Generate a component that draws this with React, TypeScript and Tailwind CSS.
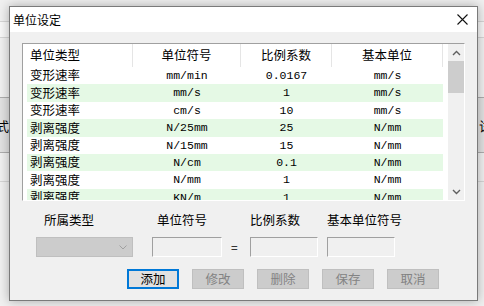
import React from "react";

const rows = [
  ["变形速率", "mm/min", "0.0167", "mm/s"],
  ["变形速率", "mm/s", "1", "mm/s"],
  ["变形速率", "cm/s", "10", "mm/s"],
  ["剥离强度", "N/25mm", "25", "N/mm"],
  ["剥离强度", "N/15mm", "15", "N/mm"],
  ["剥离强度", "N/cm", "0.1", "N/mm"],
  ["剥离强度", "N/mm", "1", "N/mm"],
  ["剥离强度", "KN/m", "1", "N/mm"],
];

const cjk = "font-['Noto_Sans_CJK_SC',sans-serif]";
const mono = "font-['Liberation_Mono','Noto_Sans_CJK_SC',monospace]";

function Chevron({ up }: { up?: boolean }) {
  return (
    <svg width="9" height="6" viewBox="0 0 9 6">
      <polyline
        points={up ? "1,5 4.5,1.5 8,5" : "1,1 4.5,4.5 8,1"}
        fill="none"
        stroke="#606060"
        strokeWidth="1.4"
      />
    </svg>
  );
}

function Button({ label, primary }: { label: string; primary?: boolean }) {
  return (
    <div
      className={
        primary
          ? "w-[52px] h-[20px] flex items-center justify-center bg-[#e1e1e1] border-2 border-[#0078d7] text-[12.5px] text-black"
          : "w-[52px] h-[20px] flex items-center justify-center bg-[#cccccc] border border-[#bfbfbf] text-[12.5px] text-[#838383]"
      }
    >
      {label}
    </div>
  );
}

function TextBox({ w }: { w: string }) {
  return (
    <div className={`${w} h-[20px] border border-[#a0a0a0] border-r-white border-b-white bg-[#f0f0f0]`} />
  );
}

export default function App() {
  return (
    <div className={`relative w-[484px] h-[306px] overflow-hidden bg-[#f0f0f0] ${cjk}`}>
      {/* window behind the dialog */}
      <div className="flex flex-col">
        <div className="h-[22px] border-b border-[#d5d5d5]" />
        <div className="h-[16px] border-b border-[#d5d5d5] bg-[#f7f7f7]" />
        <div className="h-[59px]" />
        <div className="h-[56px] bg-[#e1e1e1] border-y border-[#adadad] flex items-center justify-between text-[13px] leading-none">
          <span className="-ml-[4px]">式</span>
          <span className="mr-[-8px]">试</span>
        </div>
        <div className="h-[29px] border-b border-[#d5d5d5]" />
      </div>

      {/* dialog */}
      <div className="absolute left-[9px] top-[6px] w-[469px] h-[295px] border border-[#7a7a7a] bg-[#f0f0f0] shadow-[0_0_10px_rgba(0,0,0,0.3)] flex flex-col">
        <div className="h-[25px] bg-white flex items-center justify-between pl-[3px] pr-[9px]">
          <span className="text-[12px] text-black leading-none">单位设定</span>
          <svg width="11" height="11" viewBox="0 0 11 11">
            <path d="M0.5 0.5 L10.5 10.5 M10.5 0.5 L0.5 10.5" stroke="#111" strokeWidth="1.1" />
          </svg>
        </div>

        {/* list view */}
        <div className="mt-[11px] ml-[12px] w-[443px] h-[158px] border border-[#a0a0a0] border-r-white border-b-white bg-white flex">
          <div className="w-[425px] h-full overflow-hidden pl-[4px]">
            <div className="flex h-[23px] items-center text-[12.5px] text-black">
              <div className="w-[106px] h-full flex items-center pl-[3px] border-r border-[#e5e5e5]">单位类型</div>
              <div className="w-[108px] h-full flex items-center justify-center border-r border-[#e5e5e5]">单位符号</div>
              <div className="w-[91px] h-full flex items-center justify-center border-r border-[#e5e5e5]">比例系数</div>
              <div className="w-[111px] h-full flex items-center justify-center border-r border-[#e5e5e5]">基本单位</div>
            </div>
            {rows.map((r, i) => (
              <div
                key={i}
                className={`flex w-[416px] h-[17.4px] items-center ${i % 2 === 1 ? "bg-[#e5f9e5]" : "bg-white"}`}
              >
                <div className="w-[106px] pl-[3px] text-[12.5px] leading-none">{r[0]}</div>
                <div className={`w-[108px] text-center text-[11.5px] leading-none ${mono}`}>{r[1]}</div>
                <div className={`w-[91px] text-center text-[11.5px] leading-none ${mono}`}>{r[2]}</div>
                <div className={`w-[111px] text-center text-[11.5px] leading-none ${mono}`}>{r[3]}</div>
              </div>
            ))}
          </div>
          <div className="w-[16px] h-full bg-[#f0f0f0] flex flex-col">
            <div className="h-[17px] flex items-center justify-center">
              <Chevron up />
            </div>
            <div className="h-[32px] bg-[#cdcdcd]" />
            <div className="flex-1" />
            <div className="h-[17px] flex items-center justify-center">
              <Chevron />
            </div>
          </div>
        </div>

        {/* form */}
        <div className="mt-[11px] flex h-[16px] items-center text-[12.5px] text-black leading-none">
          <span className="ml-[34px] w-[113px]">所属类型</span>
          <span className="w-[93px]">单位符号</span>
          <span className="w-[77px]">比例系数</span>
          <span>基本单位符号</span>
        </div>

        <div className="mt-[9px] flex items-center">
          <div className="ml-[26px] w-[97px] h-[20px] bg-[#cccccc] border border-[#bfbfbf] flex items-center justify-end pr-[5px]">
            <svg width="8" height="5" viewBox="0 0 8 5">
              <polyline points="0.5,0.5 4,4 7.5,0.5" fill="none" stroke="#a0a0a0" strokeWidth="1" />
            </svg>
          </div>
          <div className="w-[19px]" />
          <TextBox w="w-[70px]" />
          <span className="w-[28px] pl-[9px] text-[12px] leading-none">=</span>
          <TextBox w="w-[68px]" />
          <div className="w-[9px]" />
          <TextBox w="w-[68px]" />
        </div>

        <div className="mt-[12px] ml-[117px] flex gap-[13px]">
          <Button label="添加" primary />
          <Button label="修改" />
          <Button label="删除" />
          <Button label="保存" />
          <Button label="取消" />
        </div>
      </div>
    </div>
  );
}
